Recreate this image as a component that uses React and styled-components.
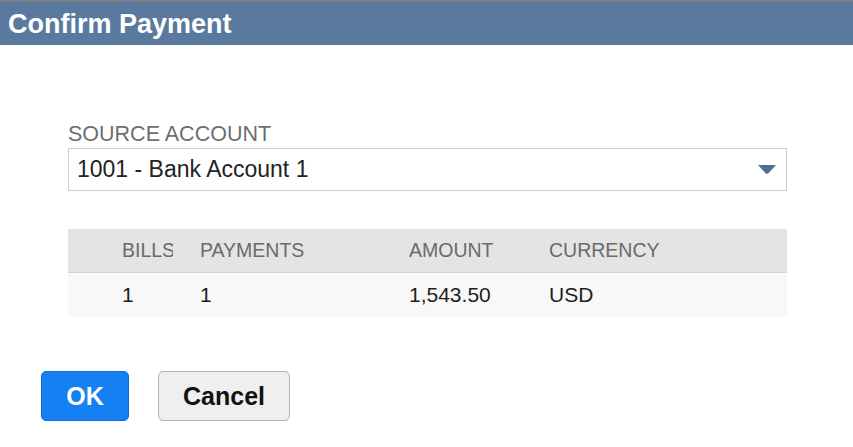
import React from 'react'
import styled, { createGlobalStyle } from 'styled-components'

const GlobalStyle = createGlobalStyle`
  html, body {
    margin: 0;
    padding: 0;
    background: #fff;
    font-family: "Liberation Sans", Arial, sans-serif;
  }
`

const columns = [
  { key: 'bills', label: 'BILLS', width: '78px', clip: true },
  { key: 'payments', label: 'PAYMENTS', width: '209px' },
  { key: 'amount', label: 'AMOUNT', width: '140px' },
  { key: 'currency', label: 'CURRENCY', width: '1fr' },
]

const rows = [{ bills: '1', payments: '1', amount: '1,543.50', currency: 'USD' }]

const gridTemplate = columns.map((c) => c.width).join(' ')

function App() {
  return (
    <>
      <GlobalStyle />
      <Dialog>
        <TitleBar>
          <h1>Confirm Payment</h1>
        </TitleBar>
        <Body>
          <Label>SOURCE ACCOUNT</Label>
          <Select>
            <span>1001 - Bank Account 1</span>
            <Caret viewBox="0 0 18 9">
              <path d="M0 0 H18 L10.5 8.2 Q9 9.4 7.5 8.2 Z" />
            </Caret>
          </Select>
          <Table>
            <HeadRow>
              {columns.map((c) => (
                <Cell key={c.key} $clip={c.clip}>
                  <span>{c.label}</span>
                </Cell>
              ))}
            </HeadRow>
            {rows.map((r, i) => (
              <DataRow key={i}>
                {columns.map((c) => (
                  <Cell key={c.key}>
                    <span>{r[c.key]}</span>
                  </Cell>
                ))}
              </DataRow>
            ))}
          </Table>
        </Body>
        <Footer>
          <Button $primary>OK</Button>
          <Button>Cancel</Button>
        </Footer>
      </Dialog>
    </>
  )
}

const Dialog = styled.div`
  width: 853px;
  height: 447px;
  background: #fff;
  overflow: hidden;
`

const TitleBar = styled.header`
  height: 45px;
  border-top: 2px solid #7b7f86;
  background: #5a799f;
  display: flex;
  align-items: center;
  padding: 2px 0 0 8px;
  box-sizing: border-box;

  h1 {
    margin: 0;
    color: #fff;
    font-size: 27px;
    font-weight: bold;
    line-height: 1;
  }
`

const Body = styled.section`
  padding: 77px 66px 0 68px;
`

const Label = styled.div`
  font-size: 21.5px;
  line-height: 24px;
  color: #6e6e6e;
  margin-bottom: 2px;
`

const Select = styled.div`
  height: 41px;
  border: 1px solid #cdcdcd;
  display: flex;
  align-items: center;
  justify-content: space-between;
  padding: 0 10px 0 8px;
  font-size: 23px;
  color: #222;
`

const Caret = styled.svg`
  width: 18px;
  height: 9px;
  fill: #4d6f98;
`

const Table = styled.div`
  margin-top: 38px;
`

const HeadRow = styled.div`
  display: grid;
  grid-template-columns: ${gridTemplate};
  align-items: center;
  height: 43px;
  padding-left: 54px;
  background: #e4e4e4;
  border-bottom: 1px solid #d3d3d3;
  font-size: 19.5px;
  color: #6a6a6a;
`

const DataRow = styled(HeadRow)`
  height: 44px;
  background: #f8f8f8;
  border-bottom: none;
  font-size: 21px;
  color: #1e1e1e;
`

const Cell = styled.div`
  padding-right: ${(p) => (p.$clip ? '27px' : '0')};

  span {
    display: block;
    white-space: nowrap;
    overflow: hidden;
  }
`

const Footer = styled.footer`
  display: flex;
  gap: 29px;
  padding: 54px 0 0 41px;
`

const Button = styled.button`
  height: 50px;
  padding: 0;
  width: ${(p) => (p.$primary ? '88px' : '132px')};
  border-radius: 5px;
  border: 1px solid ${(p) => (p.$primary ? '#0f6fd8' : '#b4b4b4')};
  background: ${(p) => (p.$primary ? '#1580f4' : '#efefef')};
  color: ${(p) => (p.$primary ? '#fff' : '#111')};
  font-family: "Liberation Sans", Arial, sans-serif;
  font-size: 25px;
  font-weight: bold;
  cursor: pointer;
`

export default App
